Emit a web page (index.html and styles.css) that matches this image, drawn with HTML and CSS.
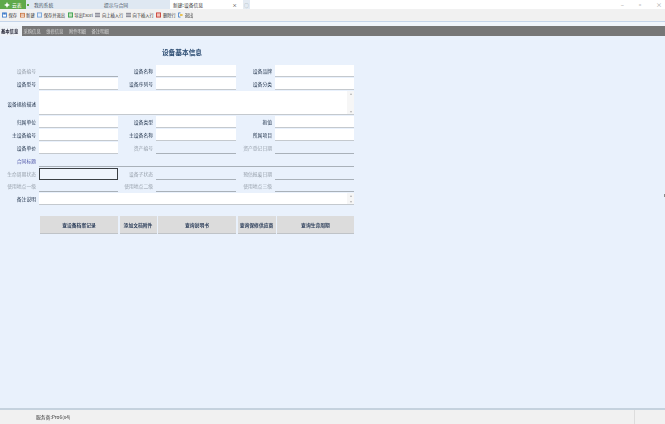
FILE: index.html
```html
<!DOCTYPE html>
<html lang="zh">
<head>
<meta charset="utf-8">
<title>新建:设备信息</title>
<link rel="stylesheet" href="styles.css">
</head>
<body>
<div class="app">
  <header class="titlebar">
    <div class="brand"><svg class="brand-icon" viewBox="0 0 8 8"><path d="M4 0l1.2 2.8L8 4 5.2 5.2 4 8 2.8 5.2 0 4l2.8-1.2z" fill="#fff"/></svg><span>云表</span></div>
    <div class="notch"><i></i></div>
    <div class="tab tab-a">我的系统</div>
    <div class="tab tab-b">提示与合同</div>
    <div class="tab tab-active"><span>新建:设备信息</span><span class="close">×</span></div>
    <div class="tab-add">○</div>
    <div class="win">
      <span>–</span><span>▫</span><span>×</span>
    </div>
  </header>
  <nav class="toolbar">
    <span class="tool"><svg viewBox="0 0 6 6"><rect x=".5" y=".5" width="5" height="5" fill="#fff" stroke="#3a78c8"/><rect x="1.5" y=".5" width="3" height="2" fill="#3a78c8"/></svg>保存</span>
    <span class="tool"><svg viewBox="0 0 6 6"><rect x=".5" y="1" width="5" height="4.5" fill="#fff" stroke="#c8703a"/><rect x="1" y="2.5" width="4" height="1" fill="#c8703a"/></svg>新建</span>
    <span class="tool"><svg viewBox="0 0 6 6"><rect x=".5" y=".5" width="5" height="5" fill="#e4eefa" stroke="#6f9ed8"/></svg>保存并退出</span>
    <span class="tool"><svg viewBox="0 0 6 6"><rect x=".5" y=".5" width="5" height="5" fill="#bfe0b8" stroke="#2f9a45"/></svg>导出Excel</span>
    <span class="tool"><svg viewBox="0 0 6 6"><path d="M0 1h6M0 3h6M0 5h6" stroke="#667" fill="none"/></svg>向上插入行</span>
    <span class="tool"><svg viewBox="0 0 6 6"><path d="M0 1h6M0 3h6M0 5h6" stroke="#667" fill="none"/></svg>向下插入行</span>
    <span class="tool"><svg viewBox="0 0 6 6"><rect x=".5" y=".5" width="5" height="5" fill="#f0c0b8" stroke="#c8372e"/></svg>删除行</span>
    <span class="tool"><svg viewBox="0 0 6 6"><path d="M3 .5H.5v5H3" stroke="#3a78c8" fill="none"/><path d="M2.5 2h3v2h-3z" fill="#e8b830"/></svg>退出</span>
  </nav>
  <div class="tabs">
    <span class="subtab subtab-active">基本信息</span>
    <span class="subtab">采购信息</span>
    <span class="subtab">维修信息</span>
    <span class="subtab">附件明细</span>
    <span class="subtab">备注明细</span>
  </div>
  <main class="content">
    <h1 class="heading">设备基本信息</h1>
    <form class="form">
      <label class="lbl muted">设备编号</label><div class="fld line"></div>
      <label class="lbl">设备名称</label><div class="fld"></div>
      <label class="lbl">设备品牌</label><div class="fld"></div>

      <label class="lbl">设备型号</label><div class="fld"></div>
      <label class="lbl">设备序列号</label><div class="fld"></div>
      <label class="lbl">设备分类</label><div class="fld"></div>

      <label class="lbl">设备规格描述</label>
      <div class="fld wide tall"><div class="scroll"><i>▴</i><i>▾</i></div></div>

      <label class="lbl">归属单位</label><div class="fld"></div>
      <label class="lbl">设备类型</label><div class="fld"></div>
      <label class="lbl">抱值</label><div class="fld"></div>

      <label class="lbl">主设备编号</label><div class="fld"></div>
      <label class="lbl">主设备名称</label><div class="fld"></div>
      <label class="lbl">所属项目</label><div class="fld"></div>

      <label class="lbl">设备单价</label><div class="fld"></div>
      <label class="lbl muted">资产编号</label><div class="fld line"></div>
      <label class="lbl muted">资产登记日期</label><div class="fld line"></div>

      <label class="lbl link">合同标题</label><div class="fld line wide"></div>

      <label class="lbl muted">生命周期状态</label><div class="fld line focus"></div>
      <label class="lbl muted">设备子状态</label><div class="fld line"></div>
      <label class="lbl muted">预估报废日期</label><div class="fld line"></div>

      <label class="lbl muted">使用地点一级</label><div class="fld line"></div>
      <label class="lbl muted">使用地点二级</label><div class="fld line"></div>
      <label class="lbl muted">使用地点三级</label><div class="fld line"></div>

      <label class="lbl">备注说明</label>
      <div class="fld wide"><div class="scroll"><i>▴</i><i>▾</i></div></div>
    </form>
    <div class="actions">
      <button class="act act-1" type="button">查设备档案记录</button>
      <button class="act act-2" type="button">添加文档附件</button>
      <button class="act act-3" type="button">查询说明书</button>
      <button class="act act-4" type="button">查询保修供应商</button>
      <button class="act act-5" type="button">查询生命周期</button>
    </div>
    <i class="edge-tick"></i>
  </main>
  <footer class="status">
    <span>服务商:Pro6(x4)</span>
    <i class="status-sep"></i>
  </footer>
</div>
</body>
</html>
```
FILE: styles.css
```css
* { box-sizing: border-box; }
html, body { margin: 0; height: 100%; }
body {
  font-family: "Noto Sans CJK SC", "Liberation Sans", sans-serif;
  font-size: 4.8px;
  color: #24364e;
  background: #e9f1fc;
}
.app { display: flex; flex-direction: column; width: 665px; height: 424px; overflow: hidden; filter: blur(0.3px); }

.titlebar { display: flex; align-items: stretch; height: 9px; flex: none; background: #fff; line-height: 9px; color: #44505f; }
.brand { width: 26px; background: #5fa94a; color: #fff; display: flex; align-items: center; gap: 2px; padding-left: 4px; }
.brand-icon { width: 6px; height: 6px; }
.notch { width: 4px; background: #dfe8f2; display: flex; align-items: center; justify-content: center; }
.notch i { width: 2px; height: 2px; background: #5fa94a; }
.tab { background: #dfe8f2; }
.tab-a { width: 70px; padding-left: 4px; }
.tab-b { width: 70px; padding-left: 4px; }
.tab-active { width: 71px; background: #fff; padding: 0 4px 0 3px; display: flex; justify-content: space-between; color: #333; }
.close { color: #333; }
.tab-add { width: 7px; margin-left: 2px; text-align: center; background: #e4ebf3; color: #9aa; }
.win { margin-left: auto; display: flex; gap: 13px; padding-right: 3px; color: #9a9a9a; font-size: 6px; }

.toolbar { display: flex; align-items: center; gap: 2.5px; height: 12px; flex: none; padding-left: 2px; background: #f1f1f1; color: #333; font-size: 4.3px; }
.tool { display: inline-flex; align-items: center; gap: 1.5px; }
.tool svg { width: 5px; height: 6px; flex: none; }

.tabs { display: flex; align-items: stretch; height: 15px; flex: none; padding-top: 3.5px; background: #f0f5fb; border-top: 1px solid #c5d5ea; font-size: 4.3px; }
.subtab { width: 22.7px; padding-left: 1.5px; background: #777; color: #d5d5d5; line-height: 10.5px; }
.subtab-active { width: 22px; padding: 0 0 0 1px; background: #eef2f7; color: #223; font-weight: 700; }
.tabs::after { content: ""; flex: 1; background: #777; }

.content { position: relative; flex: 1; min-height: 0; display: flex; flex-direction: column; padding-top: 11.5px; }
.heading { margin: 0 0 8.5px; width: 364px; text-align: center; font-size: 6.7px; line-height: 9px; font-weight: 700; color: #2a4a70; }

.form { display: grid; width: 354px; grid-template-columns: 36px 79px 32px 80px 33px 79px; column-gap: 3px; row-gap: 0.95px; grid-auto-rows: 11.9px; }
.lbl { text-align: right; white-space: nowrap; line-height: 12px; color: #24364e; direction: rtl; }
.muted { color: #98a1ac; }
.link { color: #4e56a8; }
.fld { position: relative; background: #fff; border-bottom: 1px solid #c4c9ce; }
.fld.line { background: transparent; border-bottom-color: #a9b1b9; }
.fld.wide { grid-column: span 5; }
.fld.tall { grid-row: span 2; }
.fld.focus { border: 1px solid #3a3f44; background: #eef4fc; }
.form .lbl:has(+ .tall) { grid-row: span 2; line-height: 25px; }
.scroll { position: absolute; top: 0; right: 0; bottom: 0; width: 7px; display: flex; flex-direction: column; justify-content: space-between; align-items: center; background: #f6f6f6; color: #b5b5b5; font-size: 4px; line-height: 5px; }
.scroll i { font-style: normal; }

.actions { display: flex; gap: 1.5px; width: 314px; height: 18px; margin: 11px 0 0 40px; }
.act { padding: 0; border: 0; border-bottom: 1px solid #bfc3c7; background: #dcdcdc; color: #2c3e5a; font: 700 4.8px "Noto Sans CJK SC", sans-serif; }
.act-1 { width: 78px; }
.act-2 { width: 37px; }
.act-3 { width: 78px; }
.act-4 { width: 38px; }
.act-5 { width: 77px; }

.edge-tick { position: absolute; right: 0; top: 158px; width: 1px; height: 3px; background: #888; }

.status { display: flex; height: 16px; flex: none; padding-left: 36px; background: #f1f1f1; border-top: 2px solid #c5d2de; color: #333; line-height: 14px; }
.status-sep { margin-left: auto; margin-right: 30px; width: 1px; background: #ddd; }
```
